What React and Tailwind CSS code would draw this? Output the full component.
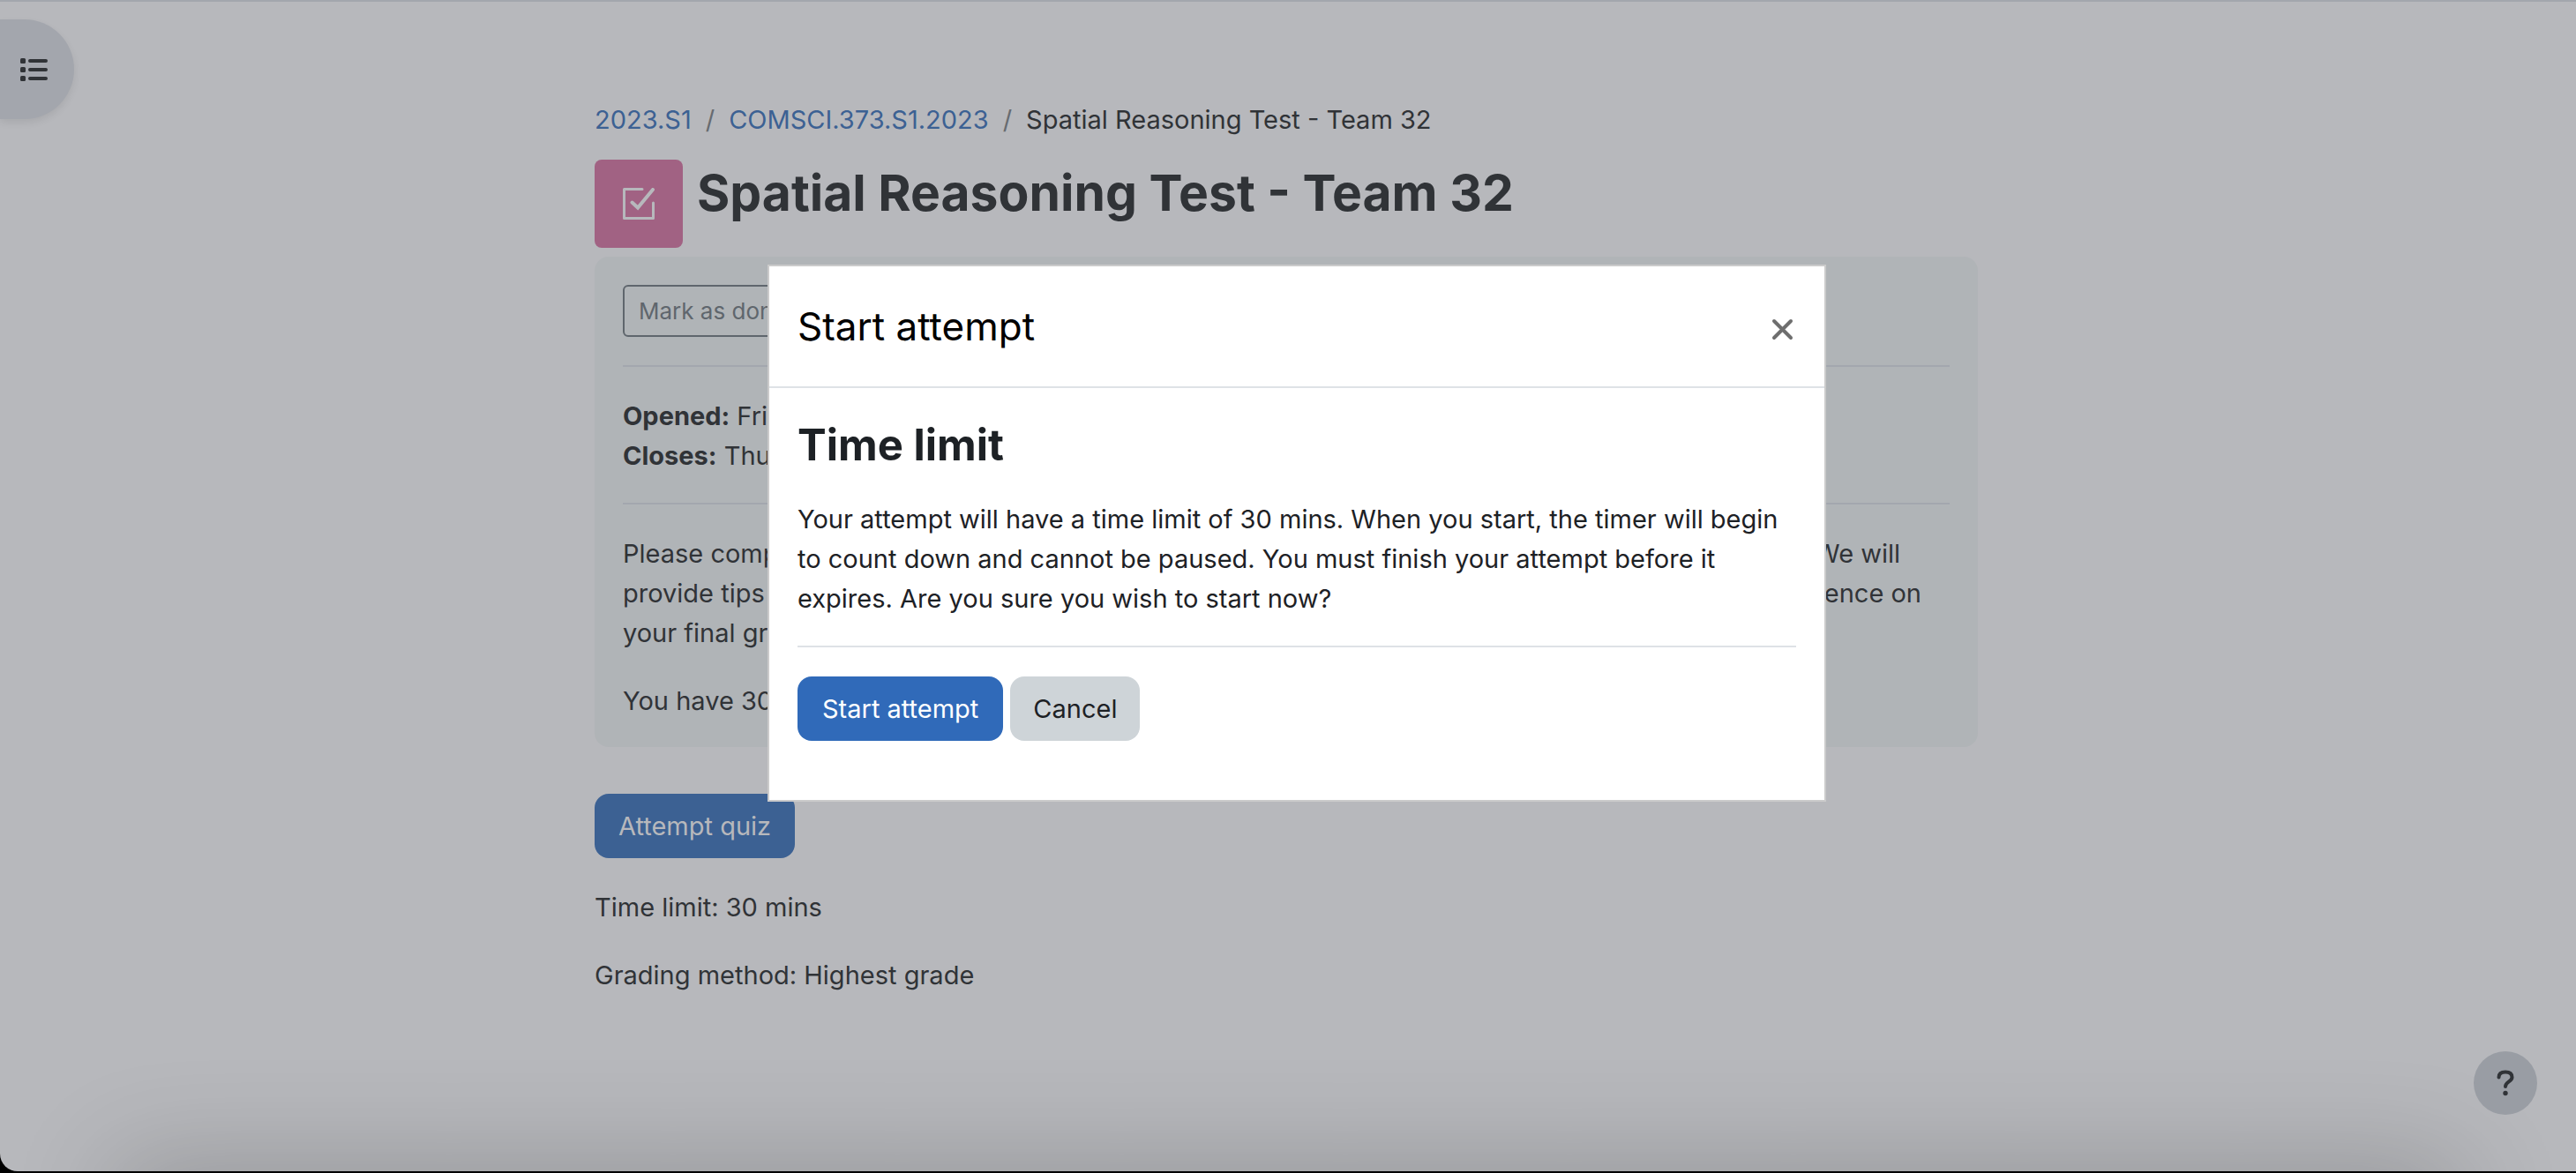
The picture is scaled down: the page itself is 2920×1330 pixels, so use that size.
import React from "react";

const hr = "border-0 border-t-2 border-[#a3a7ae]";

export default function App() {
  return (
    <div className="min-h-screen bg-black pb-[2px] font-['Inter',sans-serif] text-[29px] leading-[45px] text-[#303337]">
      <div className="relative flex min-h-[calc(100vh-2px)] flex-col overflow-hidden rounded-bl-[20px] border-t-2 border-[#a3a6ad] bg-[#b7b8bc] pr-1">
        <div className="absolute -bottom-[100px] left-[140px] right-[140px] h-[100px] shadow-[0_0_120px_10px_rgba(0,0,0,0.19)]" />

        <button aria-label="Open course index" className="absolute left-0 top-5 flex h-[113px] w-[84px] items-center rounded-r-[57px] bg-[#a3a6ad] pl-[23px] shadow-[0_4px_8px_rgba(0,0,0,0.08)]">
          <svg width="31" height="26" viewBox="0 0 31 26" fill="#303337">
            {[0, 10, 20].map((y) => (
              <g key={y}>
                <rect x="0" y={y} width="6" height="6" rx="1.5" />
                <rect x="9" y={y + 1} width="22" height="4" rx="2" />
              </g>
            ))}
          </svg>
        </button>

        <main className="mx-auto w-full max-w-[1568px] pt-[111px]">
          <nav aria-label="Breadcrumb" className="flex gap-4 text-[#3c6193]">
            <a href="#s1">2023.S1</a>
            <span className="text-[#676b70]">/</span>
            <a href="#course">COMSCI.373.S1.2023</a>
            <span className="text-[#676b70]">/</span>
            <span className="text-[#303337]">Spatial Reasoning Test - Team 32</span>
          </nav>

          <header className="mt-[23px] flex gap-4">
            <div className="flex size-[100px] items-center justify-center rounded-[8px] bg-[#a16283]">
              <svg width="36" height="36" viewBox="0 0 36 36" fill="none" stroke="#b7b8bc" strokeWidth="3" strokeLinecap="round" strokeLinejoin="round">
                <path d="M22 1.500H1.500V34.500H34.500V17" />
                <path d="M10.500 16.500L17 22.500L34 2" strokeWidth="4" strokeLinejoin="miter" />
              </svg>
            </div>
            <h1 className="pt-1 text-[57px] font-bold leading-[68px]">Spatial Reasoning Test - Team 32</h1>
          </header>

          <section className="mt-[10px] rounded-[16px] bg-[#b0b4b7] px-8 pb-[30px] pt-8">
            <button className="block h-[59px] rounded-[6px] border-2 border-[#5f666d] px-4 text-[26px] leading-[39px] text-[#5f666d]">Mark as done</button>
            <hr className={"mt-[32px] " + hr} />
            <p className="mt-[33px]"><strong>Opened:</strong> Friday</p>
            <p><strong>Closes:</strong> Thu</p>
            <hr className={"mt-[31px] " + hr} />
            <div className="mt-[33px]">
              <p className="flex justify-between pr-14"><span>Please comp</span><span>We will</span></p>
              <p className="flex justify-between pr-8"><span>provide tips</span><span>dence on</span></p>
              <p>your final grade</p>
            </div>
            <p className="mt-8">You have 30 mins</p>
          </section>

          <button className="mt-[53px] block h-[73px] rounded-[16px] bg-[#3c6193] px-[27px] text-[#b7b8bc]">Attempt quiz</button>
          <p className="mt-[33px]">Time limit: 30 mins</p>
          <p className="mt-8">Grading method: Highest grade</p>
        </main>

        <button aria-label="Help" className="absolute bottom-[64px] right-[44px] flex size-[72px] items-center justify-center rounded-full bg-[#999da4]">
          <svg width="20" height="30" viewBox="0 0 20 30" fill="none">
            <path d="M2.500 8.500C2.500 4.500 5.300 2.500 10 2.500S17.500 4.700 17.500 8.500C17.500 13.500 10 13.500 10 19" stroke="#303337" strokeWidth="4" strokeLinecap="round" />
            <circle cx="10" cy="26.500" r="2.700" fill="#303337" />
          </svg>
        </button>
      </div>

      <div className="absolute inset-x-0 top-0 flex justify-center pl-5 pt-[300px]">
        <div role="dialog" aria-labelledby="dialog-title" className="w-[1200px] border-2 border-[#cbcbcb] bg-white text-[#1d2125]">
          <div className="flex items-center justify-between border-b-2 border-[#dee2e6] py-8 pl-8 pr-[34px]">
            <h2 id="dialog-title" className="text-[44px] leading-[72px] text-black">Start attempt</h2>
            <button aria-label="Close" className="mt-2">
              <svg width="26" height="26" viewBox="0 0 26 26" stroke="#6e6e6e" strokeWidth="4" strokeLinecap="round">
                <path d="M3 3l19 19M22 3L3 22" />
              </svg>
            </button>
          </div>
          <div className="px-8 pb-[67px] pt-8">
            <h3 className="text-[49px] font-bold leading-[66px]">Time limit</h3>
            <p className="mt-7">Your attempt will have a time limit of 30 mins. When you start, the timer will begin to count down and cannot be paused. You must finish your attempt before it expires. Are you sure you wish to start now?</p>
            <hr className="mt-[31px] border-0 border-t-2 border-[#dee2e6]" />
            <div className="mt-[33px] flex gap-2">
              <button className="h-[73px] rounded-[16px] bg-[#306ab9] px-7 text-white">Start attempt</button>
              <button className="h-[73px] rounded-[16px] bg-[#ced4d8] px-[26px]">Cancel</button>
            </div>
          </div>
        </div>
      </div>
    </div>
  );
}
